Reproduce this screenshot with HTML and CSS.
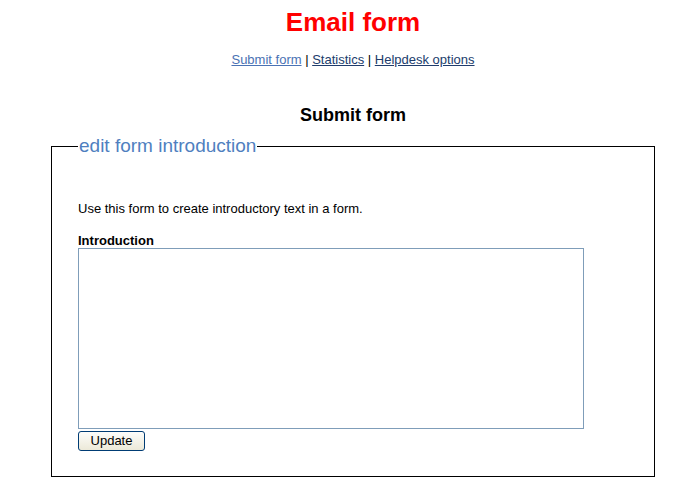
FILE: index.html
```html
<!DOCTYPE html>
<html>
<head>
<meta charset="utf-8">
<link rel="stylesheet" href="styles.css">
</head>
<body>
<div class="page">
  <h1 class="title">Email form</h1>
  <div class="nav">
    <a href="#" class="link">Submit form</a> | <a href="#" class="link visited">Statistics</a> | <a href="#" class="link visited">Helpdesk options</a>
  </div>
  <h2 class="heading">Submit form</h2>
  <fieldset class="box">
    <legend class="legend">edit form introduction</legend>
    <p class="intro">Use this form to create introductory text in a form.</p>
    <label class="label" for="intro">Introduction</label>
    <textarea id="intro" class="area"></textarea>
    <button class="btn">Update</button>
  </fieldset>
</div>
</body>
</html>
```

FILE: styles.css
```css
html, body {
  margin: 0;
  padding: 0;
  background: #fff;
}
body {
  font-family: "Liberation Sans", Arial, sans-serif;
  font-size: 13px;
  color: #000;
}
.page {
  margin-left: 30px;
  width: 646px;
  padding-top: 6px;
}
.title {
  margin: 0;
  text-align: center;
  color: #ff0000;
  font-size: 26px;
  font-weight: bold;
  line-height: 32px;
}
.nav {
  margin-top: 14px;
  text-align: center;
  font-size: 13px;
  line-height: 16px;
}
.link {
  color: #4a72b4;
  text-decoration: underline;
}
.link.visited {
  color: #203c6c;
}
.heading {
  margin: 36px 0 0;
  text-align: center;
  font-size: 18px;
  font-weight: bold;
  line-height: 22px;
}
.box {
  margin: 9px 21px 0;
  border: 1px solid #000;
  padding: 0 0 25px 26px;
}
.legend {
  color: #4f7fbf;
  font-size: 19px;
  padding: 0 1px;
  margin-left: 0;
  line-height: 22px;
}
.intro {
  margin: 44px 0 0;
  font-size: 13px;
  line-height: 16px;
}
.label {
  display: block;
  margin-top: 16px;
  font-weight: bold;
  font-size: 13px;
  line-height: 15px;
}
.area {
  display: block;
  width: 506px;
  height: 181px;
  box-sizing: border-box;
  border: 1px solid #7f9db9;
  margin: 0;
  padding: 2px;
  resize: none;
  font-family: "Liberation Sans", Arial, sans-serif;
}
.btn {
  display: block;
  margin-top: 2px;
  width: 67px;
  height: 20px;
  padding: 0;
  font-family: "Liberation Sans", Arial, sans-serif;
  font-size: 13px;
  line-height: 18px;
  color: #000;
  background: linear-gradient(#fdfdfb, #ece9d8);
  border: 1px solid #003c74;
  border-radius: 3px;
}
```
